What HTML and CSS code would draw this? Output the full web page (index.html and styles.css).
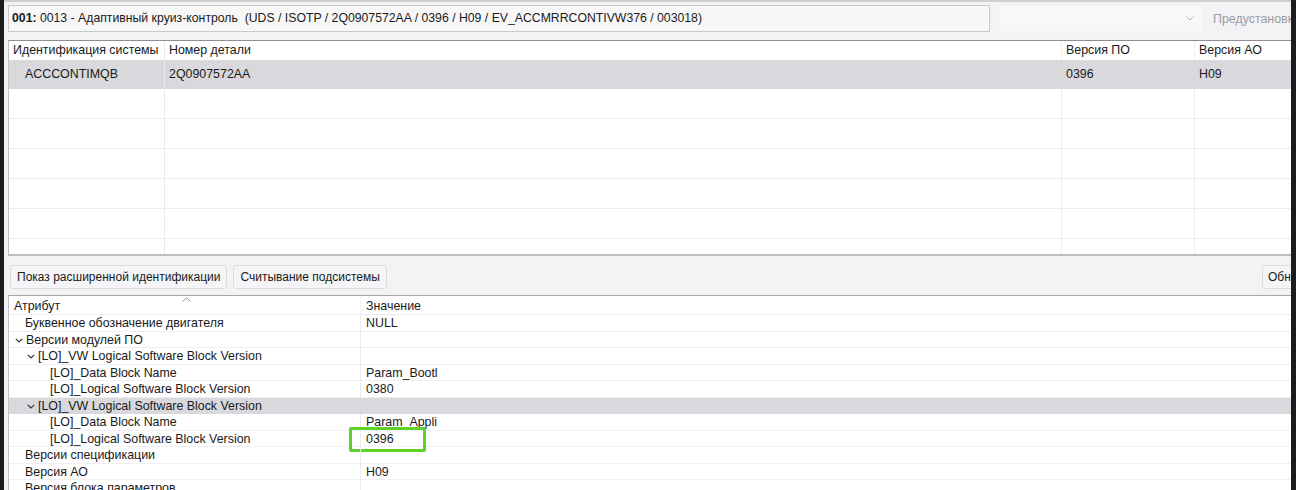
FILE: index.html
```html
<!DOCTYPE html>
<html lang="ru">
<head>
<meta charset="utf-8">
<link rel="stylesheet" href="styles.css">
</head>
<body>
<div class="frame">
  <div class="edge"></div>
  <div class="main">
    <div class="topbar">
      <div class="title"><b>001:</b> 0013 - Адаптивный круиз-контроль &nbsp;(UDS / ISOTP / 2Q0907572AA / 0396 / H09 / EV_ACCMRRCONTIVW376 / 003018)</div>
      <div class="combo"><svg class="chev-c" width="8" height="5" viewBox="0 0 8 5"><polyline points="0.5,0.5 4,4 7.5,0.5" fill="none" stroke="#b5b5b5" stroke-width="1"/></svg></div>
      <div class="preset">Предустановки</div>
    </div>

    <div class="grid-top">
      <div class="row head">
        <div class="c">Идентификация системы</div>
        <div class="c">Номер детали</div>
        <div class="c">Версия ПО</div>
        <div class="c">Версия АО</div>
      </div>
      <div class="row sel">
        <div class="c ind">ACCCONTIMQB</div>
        <div class="c">2Q0907572AA</div>
        <div class="c">0396</div>
        <div class="c">H09</div>
      </div>
      <div class="row empty"><div class="c"></div><div class="c"></div><div class="c"></div><div class="c"></div></div>
      <div class="row empty"><div class="c"></div><div class="c"></div><div class="c"></div><div class="c"></div></div>
      <div class="row empty"><div class="c"></div><div class="c"></div><div class="c"></div><div class="c"></div></div>
      <div class="row empty"><div class="c"></div><div class="c"></div><div class="c"></div><div class="c"></div></div>
      <div class="row empty"><div class="c"></div><div class="c"></div><div class="c"></div><div class="c"></div></div>
      <div class="row empty last"><div class="c"></div><div class="c"></div><div class="c"></div><div class="c"></div></div>
    </div>

    <div class="btnbar">
      <div class="btn">Показ расширенной идентификации</div>
      <div class="btn">Считывание подсистемы</div>
      <div class="spacer"></div>
      <div class="btn-wrap"><div class="btn btn-r">Обновить</div></div>
    </div>

    <div class="tree">
      <div class="trow thead">
        <div class="tc">Атрибут<svg class="sort" width="9" height="5" viewBox="0 0 9 5"><polyline points="0.5,4.5 4.5,0.8 8.5,4.5" fill="none" stroke="#9a9a9a" stroke-width="1"/></svg></div>
        <div class="tc">Значение</div>
      </div>
      <div class="trow"><div class="tc l1">Буквенное обозначение двигателя</div><div class="tc">NULL</div></div>
      <div class="trow"><div class="tc l0"><svg class="chev" width="8" height="5" viewBox="0 0 8 5"><polyline points="0.8,0.8 4,4 7.2,0.8" fill="none" stroke="#333" stroke-width="1.2"/></svg>Версии модулей ПО</div><div class="tc"></div></div>
      <div class="trow"><div class="tc l1c"><svg class="chev" width="8" height="5" viewBox="0 0 8 5"><polyline points="0.8,0.8 4,4 7.2,0.8" fill="none" stroke="#333" stroke-width="1.2"/></svg>[LO]_VW Logical Software Block Version</div><div class="tc"></div></div>
      <div class="trow"><div class="tc l2">[LO]_Data Block Name</div><div class="tc">Param_Bootl</div></div>
      <div class="trow"><div class="tc l2">[LO]_Logical Software Block Version</div><div class="tc">0380</div></div>
      <div class="trow tsel"><div class="tc l1c"><svg class="chev" width="8" height="5" viewBox="0 0 8 5"><polyline points="0.8,0.8 4,4 7.2,0.8" fill="none" stroke="#333" stroke-width="1.2"/></svg>[LO]_VW Logical Software Block Version</div><div class="tc"></div></div>
      <div class="trow"><div class="tc l2">[LO]_Data Block Name</div><div class="tc">Param_Appli</div></div>
      <div class="trow"><div class="tc l2">[LO]_Logical Software Block Version</div><div class="tc hl">0396<span class="mark"></span></div></div>
      <div class="trow"><div class="tc l1">Версии спецификации</div><div class="tc"></div></div>
      <div class="trow"><div class="tc l1">Версия АО</div><div class="tc">H09</div></div>
      <div class="trow"><div class="tc l1">Версия блока параметров</div><div class="tc"></div></div>
    </div>
  </div>
  <div class="edge edge-r"></div>
</div>
</body>
</html>
```

FILE: styles.css
```css
* { box-sizing: border-box; }
html, body { margin: 0; padding: 0; }
body {
  width: 1296px;
  height: 490px;
  overflow: hidden;
  background: #1c1c1c;
  font-family: "Liberation Sans", Arial, sans-serif;
  font-size: 12.4px;
  color: #1a1a1a;
}
.frame {
  display: flex;
  height: 490px;
}
.edge {
  width: 4px;
  flex: none;
  background: #1c1c1c;
}
.edge-r { width: 5px; }
.main {
  flex: 1;
  min-width: 0;
  overflow: hidden;
  background: #f3f2f5;
  border-top: 2px solid #cfcfd2;
  padding: 3px 0 0 4px;
  display: flex;
  flex-direction: column;
}
.topbar {
  display: flex;
  align-items: center;
  height: 27px;
  flex: none;
}
.title {
  width: 982px;
  height: 27px;
  flex: none;
  border: 1px solid #c9c9cc;
  background: #f7f7f8;
  padding: 0 0 0 3px;
  line-height: 25px;
  white-space: nowrap;
  overflow: hidden;
  font-size: 12.25px;
}
.title b { font-weight: bold; }
.combo {
  width: 202px;
  height: 25px;
  flex: none;
  margin-left: 10px;
  background: #f8f8f9;
  display: flex;
  align-items: center;
  justify-content: flex-end;
  padding-right: 8px;
}
.preset {
  margin-left: 11px;
  color: #9c9ca0;
  white-space: nowrap;
  flex: none;
}

.grid-top {
  margin-top: 8px;
  height: 216px;
  flex: none;
  background: #fff;
  border-top: 1px solid #8f8f93;
  border-left: 1px solid #c2c2c6;
  border-bottom: 2px solid #bdbdc1;
  width: 1300px;
  overflow: hidden;
  display: flex;
  flex-direction: column;
}
.row {
  display: grid;
  grid-template-columns: 156px 897px 133px 1fr;
  flex: none;
}
.row .c {
  padding-left: 4px;
  white-space: nowrap;
  border-right: 1px solid #ececee;
}
.row .c:nth-child(1) { border-right-color: #e9e9eb; }
.head { height: 19px; line-height: 19px; }
.head .c { border-right-color: #efeff1; }
.sel { height: 29px; line-height: 29px; background: #d9d8dc; }
.sel .c { border-right-color: transparent; }
.sel .ind { padding-left: 16px; }
.empty { height: 30px; border-bottom: 1px solid #ececee; }
.last { flex: 1; border-bottom: none; }

.btnbar {
  height: 40px;
  flex: none;
  display: flex;
  align-items: center;
  padding: 3px 0 0 2px;
  gap: 6px;
  border-bottom: 1px solid #a8a8ac;
}
.btn {
  height: 24px;
  line-height: 22px;
  padding: 0 6px;
  border: 1px solid #dcdce0;
  border-radius: 3px;
  background: #f5f5f7;
  white-space: nowrap;
  flex: none;
  font-size: 12px;
}
.spacer { flex: 1; }
.btn-wrap {
  width: 29px;
  flex: none;
  overflow: hidden;
}
.btn-r { display: inline-block; padding-left: 5px; }

.tree {
  flex: 1;
  background: #fff;
  border-left: 1px solid #c2c2c6;
  display: flex;
  flex-direction: column;
  overflow: hidden;
}
.trow {
  display: grid;
  grid-template-columns: 352px 1fr;
  height: 16.5px;
  line-height: 16px;
  flex: none;
  border-bottom: 1px solid #f0f0f2;
}
.tc {
  white-space: nowrap;
  padding-left: 5px;
  position: relative;
}
.trow .tc:first-child { border-right: 1px solid #ebebed; }
.thead { height: 19px; line-height: 21px; border-bottom: 1px solid #ededef; }
.thead .tc:first-child { border-right-color: #f3f3f5; }
.sort { position: absolute; left: 173px; top: 1px; }
.tsel { background: #d9d8dc; border-bottom-color: #d9d8dc; }
.tsel .tc:first-child { border-right-color: transparent; }
.l0 { padding-left: 6px; }
.l1 { padding-left: 16px; }
.l1c { padding-left: 18px; }
.l2 { padding-left: 41px; }
.chev { margin-right: 3px; vertical-align: 1px; }
.hl { overflow: visible; }
.mark {
  position: absolute;
  left: -12px;
  top: -4px;
  width: 77px;
  height: 25px;
  border: 3px solid #5fd22a;
  border-radius: 2px;
}
```
